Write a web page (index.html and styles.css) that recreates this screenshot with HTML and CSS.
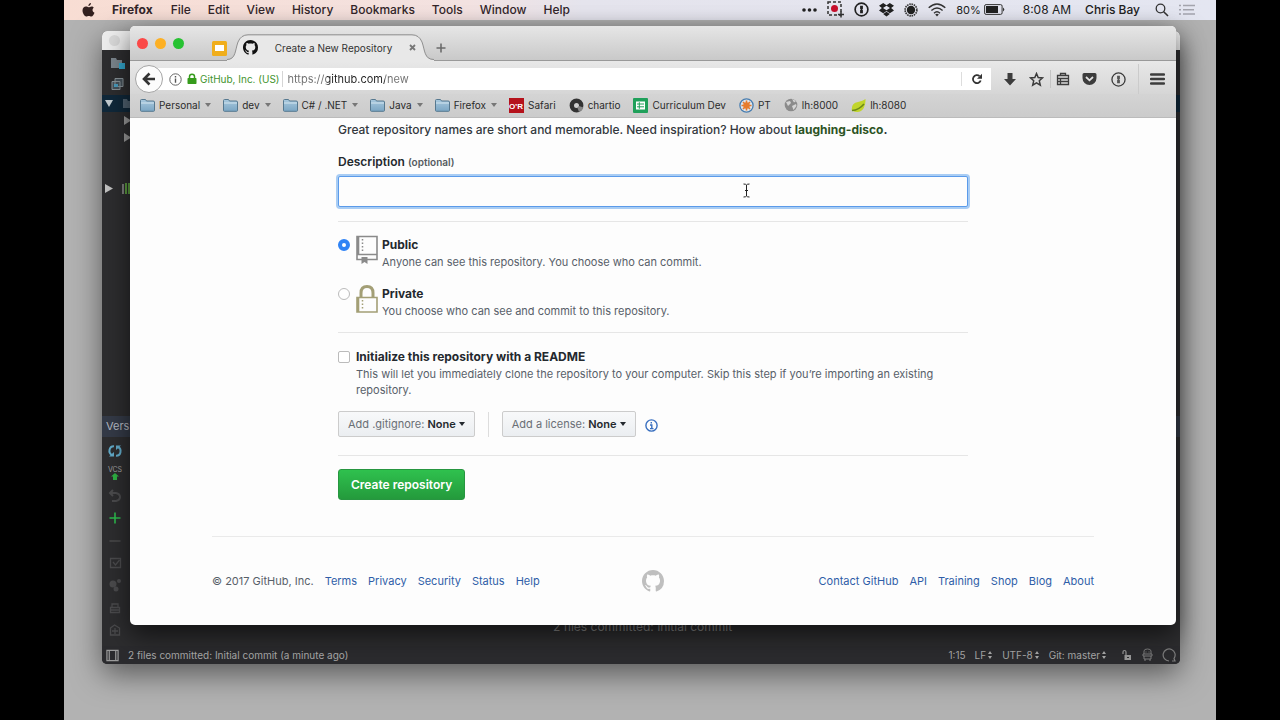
FILE: index.html
```html
<!DOCTYPE html>
<html lang="en">
<head>
<meta charset="utf-8">
<title>Create a New Repository</title>
<link rel="stylesheet" href="styles.css">
</head>
<body>
<svg class="defs" width="0" height="0" aria-hidden="true">
  <defs>
    <linearGradient id="folder-fill" x1="0" y1="0" x2="0" y2="1"><stop offset="0" stop-color="#a9c9de"/><stop offset="1" stop-color="#7ba6c4"/></linearGradient>
    <symbol id="folder" viewBox="0 0 15 14"><path d="M.5 12.5v-10q0-1 1-1h4l1 1.500h6.500q1.500 0 1.500 1v8.500q0 .8-1 .8h-12q-1 0-1-.8z" fill="url(#folder-fill)" stroke="#56788f"/><path d="M1 5h13" stroke="#d3e5ef"/></symbol>
    <symbol id="octocat" viewBox="0 0 16 16"><path fill-rule="evenodd" d="M8 0C3.580 0 0 3.580 0 8c0 3.540 2.290 6.530 5.470 7.590.4.070.55-.17.55-.38 0-.19-.01-.82-.01-1.490-2.010.37-2.530-.49-2.690-.94-.09-.23-.48-.94-.82-1.130-.28-.15-.68-.52-.01-.53.63-.01 1.080.58 1.230.82.72 1.210 1.870.87 2.330.66.070-.52.28-.87.51-1.070-1.780-.2-3.640-.89-3.640-3.950 0-.87.31-1.590.82-2.150-.08-.2-.36-1.020.08-2.120 0 0 .67-.21 2.200.82.64-.18 1.320-.27 2-.27s1.360.09 2 .27c1.530-1.040 2.200-.82 2.200-.82.44 1.100.16 1.920.08 2.120.51.56.82 1.270.82 2.150 0 3.070-1.870 3.750-3.650 3.950.29.25.54.73.54 1.480 0 1.070-.01 1.930-.01 2.200 0 .21.15.46.55.38A8.010 8.010 0 0016 8c0-4.420-3.580-8-8-8z"/></symbol>
    <symbol id="onepass" viewBox="0 0 16 16"><circle cx="8" cy="8" r="6.800" fill="none" stroke="currentColor" stroke-width="1.800"/><path d="M6.500 4h3v3.200l-.8.8.8.800V12h-3V8.800l.8-.8-.8-.8z" fill="currentColor"/></symbol>
    <symbol id="updown" viewBox="0 0 6 10"><path d="M3 1l2 3H1zM3 9l2-3H1z" fill="currentColor"/></symbol>
  </defs>
</svg>
<div class="desktop">
  <header class="menubar">
    <nav class="menus">
      <svg class="apple" width="13" height="14" viewBox="0 0 13 14"><path d="M9 0c.1 1.500-1.200 3-2.600 3C6.200 1.600 7.500.2 9 0zM11.800 4.800c-2 1.300-1.600 4 .7 4.900-.6 1.700-1.800 3.900-3.200 3.900-1 0-1.300-.6-2.500-.6s-1.600.6-2.500.6C2.600 13.600.5 10.300.5 7.600c0-2.600 1.700-4.100 3.400-4.100 1.100 0 2 .7 2.700.7.700 0 1.800-.8 3.100-.8.700 0 1.600.4 2.100 1.400z" fill="#33201f"/></svg>
      <button class="menu app">Firefox</button><button class="menu">File</button><button class="menu">Edit</button><button class="menu">View</button><button class="menu">History</button><button class="menu">Bookmarks</button><button class="menu">Tools</button><button class="menu">Window</button><button class="menu">Help</button>
    </nav>
    <div class="tray">
      <svg width="15" height="4" viewBox="0 0 15 4"><g fill="#222"><circle cx="2" cy="2" r="1.800"/><circle cx="7.500" cy="2" r="1.800"/><circle cx="13" cy="2" r="1.800"/></g></svg>
      <svg width="17" height="17" viewBox="0 0 17 17"><path d="M1 1h13v13H1z" fill="none" stroke="#333" stroke-width="1.500" stroke-dasharray="3 2"/><circle cx="7.500" cy="7.500" r="3.500" fill="#c8102e"/><path d="M14 10.500v6M11 13.500h6" stroke="#333" stroke-width="1.500"/></svg>
      <svg width="15" height="15"><use href="#onepass"/></svg>
      <svg width="15" height="14" viewBox="0 0 15 14"><path d="M4.200 0L7.500 2.300 10.800 0 15 2.800l-2.900 2.300L15 7.500l-4.200 2.700-3.300-2.300-3.300 2.300L0 7.500l2.900-2.400L0 2.800zM7.500 2.800L4 5.100l3.500 2.200L11 5.100zM4.200 11l3.300-2.200 3.300 2.200-3.300 2.400z" fill="#222"/></svg>
      <svg width="14" height="14" viewBox="0 0 14 14"><circle cx="7" cy="7" r="5.900" fill="none" stroke="#333" stroke-width="1.600" stroke-dasharray="1.500 .8"/><circle cx="7" cy="7" r="4.200" fill="#222"/></svg>
      <svg width="18" height="14" viewBox="0 0 18 14"><g fill="none" stroke="#333" stroke-width="1.400"><path d="M.7 4.800q8.300-7.600 16.600 0M3.400 7.500q5.600-5 11.200 0M6 10.200q3-2.700 6 0"/></g><path d="M9 13.500l-1.800-2q1.800-1.300 3.600 0z" fill="#333"/></svg>
      <span class="battery">80%<svg width="21" height="11" viewBox="0 0 21 11"><rect x=".6" y=".6" width="17.500" height="9.800" rx="1.500" fill="none" stroke="#333"/><path d="M2 2h12v7H2z" fill="#222"/><path d="M19 3.500q2.500 2 0 4z" fill="#333"/></svg></span>
      <span class="clock">8:08 AM</span>
      <span class="user">Chris Bay</span>
      <svg width="14" height="14" viewBox="0 0 14 14"><circle cx="5.500" cy="5.500" r="4.300" fill="none" stroke="#333" stroke-width="1.300"/><path d="M8.700 8.700l4.300 4.300" stroke="#333" stroke-width="1.600"/></svg>
      <svg width="17" height="12" viewBox="0 0 17 12"><path d="M0 1.500h2M4 1.500h12M0 5.800h2M4 5.800h11M0 10h2M4 10h12" stroke="#a3a4ad" stroke-width="1.400"/></svg>
    </div>
  </header>

  <section class="ide" aria-label="Editor">
    <div class="ide-title"><i class="dim-light"></i></div>
    <div class="tree">
      <div class="node tall"><svg width="22" height="16" viewBox="0 0 22 16"><path d="M3 3h5l1 2h5v8H3z" fill="#7b858c"/><path d="M11 8h6v6h-6z" fill="#32a4c9"/></svg></div>
      <div class="node tall"><svg width="22" height="16" viewBox="0 0 22 16"><path d="M7 2.500h8v8H7zM4 5.500h8v8H4z" fill="#46525a" stroke="#8a9499"/><path d="M6 8h4v3H6z" fill="#4b9cbd"/></svg></div>
      <div class="node chosen"><svg width="28" height="17" viewBox="0 0 28 17"><path d="M3 5h8l-4 7z" fill="#c3ccd1"/><path d="M21 4h4l1 2h2v7h-7z" fill="#506271"/></svg></div>
      <div class="node"><svg width="28" height="17" viewBox="0 0 28 17"><path d="M22 4l7 4.500-7 4.500z" fill="#9a9a9a"/></svg></div>
      <div class="node"><svg width="28" height="17" viewBox="0 0 28 17"><path d="M22 4l7 4.500-7 4.500z" fill="#9a9a9a"/></svg></div>
      <div class="node library"><svg width="28" height="17" viewBox="0 0 28 17"><path d="M3 4l8 4.500L3 13z" fill="#c0c0c0"/><path d="M21 4v10" stroke="#999" stroke-width="1.500"/><path d="M24 3v11M27 3v11" stroke="#5c9c3f" stroke-width="2"/></svg></div>
    </div>
    <div class="vc-head">Version Control</div>
    <div class="vc">
      <div class="vc-tools">
        <svg width="16" height="16" viewBox="0 0 16 16"><path d="M7 3.200C2 3 .8 10 5 12M9 12.800c5 .2 6.200-6.800 2-8.800" fill="none" stroke="#62abc9" stroke-width="2"/><path d="M2 13.500h5V9zM14 2.500H9V7z" fill="#62abc9"/></svg>
        <svg width="16" height="16" viewBox="0 0 16 16"><text x="8" y="7" text-anchor="middle" font-family="Inter" font-size="7" fill="#a0a0a0">VCS</text><path d="M8 8l4 3.500h-2V15H6v-3.500H4z" fill="#2fb344"/></svg>
        <svg width="16" height="16" viewBox="0 0 16 16"><path d="M3 5h6q4 1 4 4t-4 4H5M6 2L3 5l3 3" fill="none" stroke="#4b4b4d" stroke-width="2"/></svg>
        <svg width="16" height="16" viewBox="0 0 16 16"><path d="M8 2.500v11M2.500 8h11" stroke="#2dbb4e" stroke-width="1.600"/></svg>
        <svg width="16" height="16" viewBox="0 0 16 16"><path d="M2.500 8h11" stroke="#4b4b4d" stroke-width="1.500"/></svg>
        <svg width="16" height="16" viewBox="0 0 16 16"><path d="M3.500 3.500h10v9h-10zM6 7l2.500 3 4-5" fill="none" stroke="#4b4b4d" stroke-width="1.300"/></svg>
        <svg width="16" height="16" viewBox="0 0 16 16"><circle cx="6" cy="7" r="3.500" fill="#4b4b4d"/><circle cx="12" cy="4" r="2" fill="#4b4b4d"/><circle cx="9" cy="12" r="2.500" fill="#4b4b4d"/></svg>
        <svg width="16" height="16" viewBox="0 0 16 16"><path d="M3.500 7.500h9v5h-9zM5 7V4h6v3M3 10h10" fill="none" stroke="#4b4b4d" stroke-width="1.300"/></svg>
        <svg width="16" height="16" viewBox="0 0 16 16"><path d="M3.500 6l4-3 5 3v7h-9zM8 6v6M5 9h6" fill="none" stroke="#4b4b4d" stroke-width="1.300"/></svg>
      </div>
      <p class="toast">2 files committed: Initial commit</p>
    </div>
    <footer class="status">
      <svg width="13" height="13" viewBox="0 0 14 13"><path d="M1 1h12v11H1zM3.500 1v11M10.500 1v11" fill="none" stroke="#9b9b9b" stroke-width="1.300"/></svg>
      <span class="message">2 files committed: Initial commit (a minute ago)</span>
      <span>1:15</span>
      <span class="pick">LF<svg width="6" height="10"><use href="#updown"/></svg></span>
      <span class="pick">UTF-8<svg width="6" height="10"><use href="#updown"/></svg></span>
      <span class="pick">Git: master<svg width="6" height="10"><use href="#updown"/></svg></span>
      <span class="state">
        <svg width="12" height="12" viewBox="0 0 12 12"><path d="M2 5V3q0-1.500 1.500-1.500T5 3v3" fill="none" stroke="#999" stroke-width="1.200"/><path d="M3.500 6H10v5H3.500z" fill="#999"/><path d="M6 8.500h2" stroke="#2b2b2d"/></svg>
        <svg width="11" height="14" viewBox="0 0 11 14"><path d="M2 6V3q0-2 3.500-2T9 3v3M1 6h9v2H1zM2 8v3h7V8M3 11v2M8 11v2M3.500 4h1M6.500 4h1" fill="none" stroke="#7d7d7d"/></svg>
        <svg width="14" height="14" viewBox="0 0 14 14"><path d="M7 13A6 6 0 1 1 12 10.500l1 2.500h-3" fill="none" stroke="#7d7d7d" stroke-width="1.200"/></svg>
      </span>
    </footer>
  </section>

  <section class="browser" aria-label="Firefox">
    <div class="tabs">
      <span class="lights"><i class="close"></i><i class="min"></i><i class="max"></i></span>
      <svg class="pinned" width="15" height="15" viewBox="0 0 15 15"><rect width="15" height="15" rx="1.500" fill="#f0ae1c"/><path d="M3 4h9v6H3z" fill="#fff"/></svg>
      <div class="tab">
        <svg class="tab-shape" width="208" height="27" viewBox="0 0 208 27"><path d="M0 26C9 26 8 16 11 8Q14 1.500 21 1.500H185Q192 1.500 195 8C198 16 197 26 207 26V27H0z" fill="#e8e8e8"/><path d="M0 25.500C9 25.500 8 16 11 8Q14 .8 21 .8H185Q192 .8 195 8C198 16 197 25.500 207 25.500" fill="none" stroke="#8f8f8f"/></svg>
        <svg class="fav" width="15" height="15" fill="#111"><use href="#octocat"/></svg>
        <span class="tab-name">Create a New Repository</span>
        <button class="tab-close" aria-label="Close tab"><svg width="7" height="7" viewBox="0 0 7 7"><path d="M1 1l5 5M6 1L1 6" stroke="#777" stroke-width="1.800"/></svg></button>
      </div>
      <button class="new-tab" aria-label="New tab"><svg width="10" height="10" viewBox="0 0 10 10"><path d="M5 .5v9M.5 5h9" stroke="#6b6b6b" stroke-width="1.600"/></svg></button>
    </div>
    <div class="nav">
      <button class="back" aria-label="Back"><svg width="14" height="14" viewBox="0 0 14 14"><path d="M7.500 1.500L2 7l5.500 5.500M2.500 7H13" fill="none" stroke="#333" stroke-width="2.600"/></svg></button>
      <div class="address">
        <svg width="13" height="13" viewBox="0 0 13 13"><circle cx="6.500" cy="6.500" r="5.700" fill="none" stroke="#666"/><path d="M6.500 5.500v4.300M6.500 3v1.400" stroke="#555" stroke-width="1.400"/></svg>
        <svg class="lock" width="10" height="12" viewBox="0 0 10 12"><path d="M2.500 6V3.500q0-2.300 2.500-2.300t2.500 2.300V6" fill="none" stroke="#369b1c" stroke-width="1.500"/><rect x=".5" y="5" width="9" height="6" rx=".7" fill="#369b1c"/></svg>
        <span class="identity">GitHub, Inc. (US)</span>
        <input class="url" type="text" aria-label="Address" value="https://github.com/new">
        <button class="reload" aria-label="Reload"><svg width="12" height="12" viewBox="0 0 12 12"><path d="M9.700 7.500A4 4 0 1 1 8.500 3" fill="none" stroke="#333" stroke-width="1.800"/><path d="M11 .8v5H6z" fill="#333"/></svg></button>
      </div>
      <div class="tools">
        <button aria-label="Downloads"><svg width="14" height="14" viewBox="0 0 14 14"><path d="M4.500 1h5v6H13l-6 6.500L1 7h3.500z" fill="#3c3c3c"/></svg></button>
        <button aria-label="Bookmark"><svg width="15" height="15" viewBox="0 0 15 15"><path d="M7.500 1.500l1.700 4 4.300.4-3.200 2.900 1 4.300-3.800-2.300-3.800 2.300 1-4.300L1.500 5.900l4.300-.4z" fill="none" stroke="#3c3c3c" stroke-width="1.500"/></svg></button>
        <button class="ruled" aria-label="Library"><svg width="14" height="14" viewBox="0 0 14 14"><path d="M1.500 3.500h11v9h-11zM1.500 6.500h11M1.500 9.500h11M4.500 6v6M4.500 3V1.500h5V3" fill="none" stroke="#3c3c3c" stroke-width="1.300"/></svg></button>
        <button aria-label="Pocket"><svg width="15" height="14" viewBox="0 0 15 14"><path d="M2 1h11q1.500 0 1.500 1.500V6a7 7 0 0 1-14 0V2.500Q.5 1 2 1z" fill="#3c3c3c"/><path d="M4 5l3.500 3.300L11 5" fill="none" stroke="#e2e2e2" stroke-width="1.800"/></svg></button>
        <button aria-label="1Password"><svg width="15" height="15" viewBox="0 0 16 16"><circle cx="8" cy="8" r="7" fill="none" stroke="#3c3c3c" stroke-width="1.400"/><path d="M6.500 4h3v3.200l-.8.8.8.800V12h-3V8.800l.8-.8-.8-.8z" fill="#555"/></svg></button>
        <button class="burger" aria-label="Menu"><svg width="15" height="12" viewBox="0 0 15 12"><path d="M1 1.500h13M1 6h13M1 10.500h13" stroke="#3c3c3c" stroke-width="2.300" stroke-linecap="round"/></svg></button>
      </div>
    </div>
    <nav class="bookmarks">
      <button class="mark"><svg width="15" height="14"><use href="#folder"/></svg>Personal<i class="caret"></i></button>
      <button class="mark"><svg width="15" height="14"><use href="#folder"/></svg>dev<i class="caret"></i></button>
      <button class="mark"><svg width="15" height="14"><use href="#folder"/></svg>C# / .NET<i class="caret"></i></button>
      <button class="mark"><svg width="15" height="14"><use href="#folder"/></svg>Java<i class="caret"></i></button>
      <button class="mark"><svg width="15" height="14"><use href="#folder"/></svg>Firefox<i class="caret"></i></button>
      <a class="mark" href="#"><svg width="15" height="15" viewBox="0 0 15 15"><path d="M0 0h15v15H0z" fill="#b5121b"/><text x="7" y="11" text-anchor="middle" font-family="Liberation Sans" font-weight="700" font-size="8" fill="#fff">O’R</text></svg>Safari</a>
      <a class="mark" href="#"><svg width="15" height="15" viewBox="0 0 15 15"><circle cx="7.500" cy="7.500" r="4.700" fill="none" stroke="#333" stroke-width="4.400"/><path d="M10 8l4.500 1.500A7 7 0 0 1 10 14L8.500 10z" fill="#888"/></svg>chartio</a>
      <a class="mark" href="#"><svg width="15" height="15" viewBox="0 0 15 15"><rect width="15" height="15" rx="1" fill="#1fa05a"/><path d="M3 3.500h9v8H3z" fill="#fff"/><path d="M4 6h7M4 8.800h7M6.300 4.200v6.600" stroke="#1fa05a"/></svg>Curriculum Dev</a>
      <a class="mark" href="#"><svg width="15" height="15" viewBox="0 0 15 15"><circle cx="7.500" cy="7.500" r="6.600" fill="#dde5ec" stroke="#4a7eb0" stroke-width="1.300"/><path d="M7.500 2.500v10M2.500 7.500h10M4 4l7 7M11 4l-7 7" stroke="#e67c2d" stroke-width="1.600"/><circle cx="7.500" cy="7.500" r="2.500" fill="none" stroke="#e67c2d" stroke-width="1.500"/></svg>PT</a>
      <a class="mark" href="#"><svg width="14" height="14" viewBox="0 0 14 14"><circle cx="7" cy="7" r="6.300" fill="#8b8b8b"/><path d="M2 4l4-1 1 2-3 3zM8 8l4-2 .5 2-3 4zM8 1l4 2-2 1.500z" fill="#d5d5d5"/></svg>lh:8000</a>
      <a class="mark" href="#"><svg width="15" height="15" viewBox="0 0 15 15"><path d="M14.500 1Q12 3 7 4 0 5 .8 12.500q8 4 12-2.500 2-4 1.700-9z" fill="#c1d52c"/><path d="M1 12.500Q8 12 13 6" fill="none" stroke="#6c8a17" stroke-width="1.500"/></svg>lh:8080</a>
    </nav>
    <div class="page">
      <form class="repo">
        <p class="hint">Great repository names are short and memorable. Need inspiration? How about <strong>laughing-disco</strong><b>.</b></p>
        <label class="desc-label" for="desc">Description <small>(optional)</small></label>
        <input class="desc" id="desc" type="text">
        <svg class="ibeam" width="7" height="15" viewBox="0 0 7 15"><path d="M.5 1q2.500 0 3 1 .5-1 3-1M3.500 2v11M.5 14q2.500 0 3-1 .5 1 3 1M2 7.500h3" fill="none" stroke="#222"/></svg>
        <fieldset class="visibility">
          <label class="option">
            <input type="radio" name="vis" checked>
            <svg width="22" height="30" viewBox="0 0 22 30"><path d="M1 1.500h20v23H1zM1 19.500h20M2.500 1.500v18" fill="none" stroke="#8a8a8a" stroke-width="1.600"/><path d="M6.500 4v13" stroke="#8a8a8a" stroke-width="1.500" stroke-dasharray="1.500 2"/><path d="M5.500 22h6v7l-3-2-3 2z" fill="#8a8a8a"/></svg>
            <span class="words"><b>Public</b><span>Anyone can see this repository. You choose who can commit.</span></span>
          </label>
          <label class="option">
            <input type="radio" name="vis">
            <svg width="22" height="30" viewBox="0 0 22 30"><path d="M1 13.500h20V28H1zM2.500 13.500V28" fill="none" stroke="#a39f76" stroke-width="1.600"/><path d="M5 13V9q0-6.500 6-6.500T17 9v4" fill="none" stroke="#a39f76" stroke-width="3"/><path d="M6.500 16v10" stroke="#a39f76" stroke-width="1.500" stroke-dasharray="1.500 2"/></svg>
            <span class="words"><b>Private</b><span>You choose who can see and commit to this repository.</span></span>
          </label>
        </fieldset>
        <div class="init">
          <label class="readme">
            <input type="checkbox">
            <span class="words"><b>Initialize this repository with a README</b><span>This will let you immediately clone the repository to your computer. Skip this step if you’re importing an existing repository.</span></span>
          </label>
          <div class="pickers">
            <button class="picker" type="button" aria-haspopup="menu">Add .gitignore: <b>None</b><i class="caret"></i></button>
            <span class="rule"></span>
            <button class="picker" type="button" aria-haspopup="menu">Add a license: <b>None</b><i class="caret"></i></button>
            <svg class="info" width="13" height="13" viewBox="0 0 13 13"><circle cx="6.500" cy="6.500" r="5.600" fill="none" stroke="#3a70c0" stroke-width="1.400"/><path d="M5 6h1.800v3.500M5 9.600h3.500M6.300 3v1.500" fill="none" stroke="#3a70c0" stroke-width="1.400"/></svg>
          </div>
        </div>
        <button class="create" type="submit">Create repository</button>
      </form>
      <footer class="site-foot">
        <div class="links"><span>© 2017 GitHub, Inc.</span><a href="#">Terms</a><a href="#">Privacy</a><a href="#">Security</a><a href="#">Status</a><a href="#">Help</a></div>
        <svg class="mark-logo" width="22" height="22" fill="#bfbfbf"><use href="#octocat"/></svg>
        <div class="links end"><a href="#">Contact GitHub</a><a href="#">API</a><a href="#">Training</a><a href="#">Shop</a><a href="#">Blog</a><a href="#">About</a></div>
      </footer>
    </div>
  </section>
</div>
</body>
</html>
```
FILE: styles.css
```css
* { box-sizing: border-box; }
html, body { height: 100%; }
body { margin: 0; background: #000; font-family: Inter, "Liberation Sans", sans-serif; font-size: 11px; color: #24292e; }
button, input { font: inherit; color: inherit; }
button { padding: 0; border: 0; background: none; }
a { color: inherit; text-decoration: none; }
svg { display: block; flex: none; }
.defs { position: absolute; }
p { margin: 0; }

.desktop { position: relative; height: 100%; margin: 0 5%; overflow: hidden; background: #b2b2b2; }
.menubar { display: flex; align-items: center; justify-content: space-between; height: 20px; padding: 0 20px 1px 18px; background: linear-gradient(90deg, #f8ddd3, #f3e2e1 35%, #e5e4ed 45%, #e4e6f1); font-size: 12px; color: #33262a; }
.menus, .tray { display: flex; align-items: center; }
.menus { gap: 17px; }
.menu { font-weight: 500; }
.menu.app { margin-right: 1px; font-weight: 700; }
.tray { gap: 10px; color: #222; }
.battery { display: flex; align-items: center; gap: 3px; font-size: 11px; }
.clock { margin: 0 4px 0 8px; }
.user { margin-right: 5px; font-weight: 500; }

.ide { position: absolute; left: 38px; right: 36px; top: 31px; bottom: 56px; display: flex; flex-direction: column; overflow: hidden; border-radius: 5px; background: #2d2d2f; box-shadow: 0 10px 30px rgba(0, 0, 0, .5); color: #a8a8a8; }
.ide-title { height: 19px; padding: 4px 7px; background: #ececec; }
.dim-light { display: block; width: 11px; height: 11px; border-radius: 50%; background: #d8d8d8; }
.tree { flex: 1; padding-top: 3px; }
.node { height: 17px; overflow: hidden; }
.node.tall { height: 21px; padding: 2px 0 0 6px; }
.node.chosen { background: #10283a; }
.node.library { margin-top: 34px; }
.vc-head { height: 21px; padding-left: 4px; line-height: 21px; background: #343a47; color: #b5b9c2; }
.vc { display: flex; height: 209px; }
.vc-tools { display: flex; flex-direction: column; justify-content: space-between; width: 28px; padding: 6px 0 8px 5px; }
.toast { flex: 1; align-self: flex-end; padding: 0 25px 12px 0; text-align: center; font-size: 12px; color: #858585; }
.status { display: flex; align-items: center; gap: 9px; height: 18px; padding: 0 4px; background: #2b2b2e; font-size: 10px; }
.message { flex: 1; }
.pick { display: flex; align-items: center; gap: 1px; }
.state { display: flex; align-items: center; gap: 9px; margin-left: 5px; }

.browser { position: absolute; left: 66px; right: 40px; top: 26px; bottom: 95px; display: flex; flex-direction: column; overflow: hidden; border-radius: 5px; background: #fdfdfd; box-shadow: 0 10px 26px rgba(0, 0, 0, .6); }
.tabs { display: flex; align-items: center; height: 35px; padding-left: 7px; background: linear-gradient(#e6e6e6, #c9c9c9); border-bottom: 1px solid #999; }
.lights { display: flex; gap: 7px; }
.lights i { width: 11px; height: 11px; border-radius: 50%; }
.close { background: #fb4948; }
.min { background: #fdb024; }
.max { background: #27c232; }
.pinned { margin: 10px 0 0 28px; }
.tab { position: relative; display: flex; align-items: center; width: 208px; height: 27px; margin-top: 9px; padding: 0 10px 0 16px; }
.tab-shape { position: absolute; left: 0; top: 0; }
.fav, .tab-name, .tab-close { position: relative; }
.tab-name { flex: 1; text-align: center; font-size: 10px; color: #333; }
.tab-close { margin-right: 9px; }
.new-tab { margin: 10px 0 0 1px; }
.nav { display: flex; align-items: center; height: 33px; padding: 3px 4px 0 5px; background: linear-gradient(#e8e8e8, #d6d6d6); }
.back { display: grid; place-items: center; width: 28px; height: 28px; margin-right: -12px; border: 1px solid #a5a5a5; border-radius: 50%; background: #fcfcfc; z-index: 1; }
.address { flex: 1; display: flex; align-items: center; height: 22px; padding-left: 18px; background: #fff; font-size: 10px; }
.lock { margin: 0 3px 0 5px; }
.identity { padding-right: 3px; border-right: 1px solid #d5d5d5; line-height: 16px; color: #43942e; }
.url { flex: 1; min-width: 0; padding: 0 0 0 4px; border: 0; outline: 0; font-size: 11px; color: transparent; background: linear-gradient(90deg, #707070 44px, #222 44px, #222 102px, #707070 102px) text; }
.reload { width: 30px; height: 14px; padding-left: 9px; border-left: 1px solid #ddd; }
.tools { display: flex; align-items: center; }
.tools button { display: grid; place-items: center; width: 27px; height: 18px; }
.tools button:first-child { margin-left: 5px; }
.tools .ruled { width: 25px; border-left: 1px solid #c4c4c4; }
.tools button:nth-child(4) { width: 28px; }
.tools button:nth-child(5) { width: 30px; }
.tools .burger { width: 34px; height: 30px; margin-left: 5px; padding-left: 4px; border-left: 1px solid #cbcbcb; }
.bookmarks { display: flex; align-items: center; gap: 13px; height: 24px; padding: 0 0 1px 10px; background: linear-gradient(#d4d4d4, #cbcbcb); border-bottom: 1px solid #bbb; font-size: 10px; color: #2b2b2b; }
.mark { display: flex; align-items: center; gap: 4px; }
.caret { display: inline-block; border: 3px solid transparent; border-top: 4px solid currentColor; border-bottom: 0; }
.mark .caret { margin: 0 -1px 0 1px; color: #777; }

.page { flex: 1; padding: 3px 82px 0; }
.repo { position: relative; width: 630px; margin: 0 auto; }
.hint { font-size: 12px; line-height: 18px; font-weight: 500; color: #33383d; }
.hint strong { font-weight: 700; color: #2c5324; }
.hint b { font-weight: 700; }
.desc-label { display: block; margin-top: 14px; font-size: 12px; line-height: 18px; font-weight: 600; }
.desc-label small { font-size: 10px; font-weight: 600; color: #555b60; }
.desc { display: block; width: 100%; height: 31px; margin-top: 5px; padding: 0 8px; border: 1px solid #5b9bea; border-radius: 2px; outline: 0; background: #fdfdfd; box-shadow: 0 0 0 2px #a9cdf4; }
.ibeam { position: absolute; right: 218px; top: 62px; }
.visibility { margin: 14px 0 0; padding: 13px 0 13px; border: 0; border-top: 1px solid #e6e6e6; border-bottom: 1px solid #e6e6e6; display: grid; gap: 14px; }
.option, .readme { display: flex; align-items: flex-start; }
.option { height: 35px; }
.option svg { margin-right: 4px; }
input[type=radio], input[type=checkbox] { appearance: none; flex: none; width: 12px; height: 12px; margin: 4px 6px 0 0; border: 1px solid #bbb; background: #fff; }
input[type=radio] { border-radius: 50%; }
input[type=radio]:checked { border: 4px solid #2f83f5; }
input[type=checkbox] { border-radius: 2px; }
.words { display: flex; flex-direction: column; font-size: 11px; line-height: 16px; color: #586069; }
.words b { font-size: 12px; line-height: 19px; font-weight: 700; color: #24292e; }
.init { padding: 14px 0 18px; border-bottom: 1px solid #e6e6e6; }
.pickers { display: flex; align-items: center; margin-top: 13px; }
.picker { height: 26px; padding: 0 9px; border: 1px solid #ccc; border-radius: 2px; background: linear-gradient(#f8f9fa, #ebeef1); color: #6a6f75; }
.picker b { font-weight: 600; color: #24292e; }
.picker .caret { margin: 0 0 2px 3px; color: #24292e; }
.rule { width: 1px; height: 25px; margin: 0 13px; background: #ddd; }
.info { margin: 2px 0 0 9px; }
.create { height: 31px; margin-top: 13px; padding: 0 12px; border: 1px solid #279640; border-radius: 3px; background: linear-gradient(#2fc14e, #249a3c); font-size: 12px; font-weight: 600; color: #fff; }
.site-foot { display: flex; align-items: center; margin-top: 36px; padding-top: 33px; border-top: 1px solid #eaeaea; color: #586069; }
.links { flex: 1; display: flex; gap: 11px; }
.links a { color: #2f5da8; }
.links.end { justify-content: flex-end; }
```
